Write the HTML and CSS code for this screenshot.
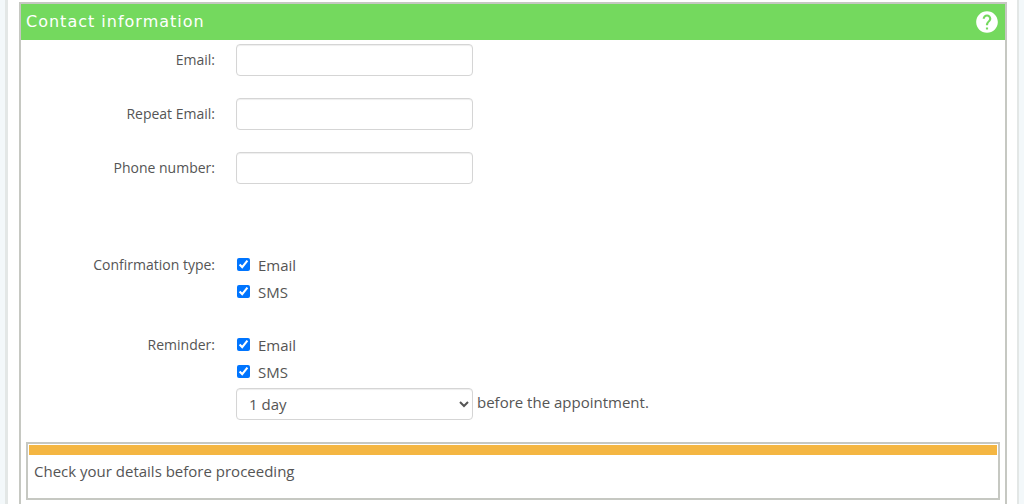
FILE: index.html
```
<!DOCTYPE html>
<html lang="en">
<head>
    <meta charset="UTF-8">
    <meta name="viewport" content="width=device-width, initial-scale=1.0">
    <title>Contact information</title>
    <link rel="stylesheet" href="styles.css">
</head>
<body>
    <main class="page">
        <form class="contact">
            <div class="contact_header">
                <h2 class="header_title">Contact information</h2>
                <button type="button" class="help_btn" aria-label="Help">
                    <svg viewBox="0 0 24 24" width="26" height="26" aria-hidden="true">
                        <path fill="#fff" d="M12 2C6.480 2 2 6.480 2 12s4.480 10 10 10 10-4.480 10-10S17.520 2 12 2zm1 17h-2v-2h2v2zm2.070-7.750l-.9.920C13.450 12.900 13 13.500 13 15h-2v-.5c0-1.100.45-2.100 1.170-2.830l1.240-1.260c.37-.36.59-.86.59-1.410 0-1.100-.9-2-2-2s-2 .9-2 2H8c0-2.210 1.790-4 4-4s4 1.790 4 4c0 .88-.36 1.680-.93 2.250z"/>
                    </svg>
                </button>
            </div>

            <div class="fields">
                <div class="form_row">
                    <label class="row_label" for="email">Email:</label>
                    <input class="text_input" id="email" type="email" name="email">
                </div>
                <div class="form_row">
                    <label class="row_label" for="repeat_email">Repeat Email:</label>
                    <input class="text_input" id="repeat_email" type="email" name="repeat_email">
                </div>
                <div class="form_row">
                    <label class="row_label" for="phone">Phone number:</label>
                    <input class="text_input" id="phone" type="tel" name="phone">
                </div>
            </div>

            <div class="options">
                <div class="form_row" role="group" aria-labelledby="confirmation_label">
                    <span class="row_label" id="confirmation_label">Confirmation type:</span>
                    <div class="checks">
                        <label class="check"><input type="checkbox" name="confirm_email" checked>Email</label>
                        <label class="check"><input type="checkbox" name="confirm_sms" checked>SMS</label>
                    </div>
                </div>
                <div class="form_row" role="group" aria-labelledby="reminder_label">
                    <span class="row_label" id="reminder_label">Reminder:</span>
                    <div class="checks">
                        <label class="check"><input type="checkbox" name="remind_email" checked>Email</label>
                        <label class="check"><input type="checkbox" name="remind_sms" checked>SMS</label>
                        <div class="reminder_time">
                            <select class="text_input" id="reminder_days" name="reminder_days">
                                <option>1 day</option>
                                <option>2 days</option>
                                <option>3 days</option>
                            </select>
                            <label for="reminder_days">before the appointment.</label>
                        </div>
                    </div>
                </div>
            </div>

            <div class="notice">
                <p class="notice_text">Check your details before proceeding</p>
            </div>
        </form>
    </main>
</body>
</html>
```
FILE: styles.css
```
* {
    box-sizing: border-box;
}

body {
    margin: 0;
    background: #f3f8fa;
    color: #555;
    font-family: "Open Sans", sans-serif;
    font-size: 15px;
    line-height: 20px;
}

.page {
    margin: 0 5px;
    padding: 2px 10px 0 11px;
    border: solid #e3e7e6;
    border-width: 0 2px 0 3px;
    background: #fff;
}

/* Green titled box round the whole form */
.contact {
    padding-bottom: 16px;
    border: 2px solid #c6c8c2;
}

.contact_header {
    display: flex;
    justify-content: space-between;
    align-items: center;
    height: 36px;
    padding: 0 5px;
    background: #74d95e;
}

.header_title {
    margin: 0;
    color: #fff;
    font-family: Verdana, "DejaVu Sans", sans-serif;
    font-size: 16px;
    font-weight: normal;
    letter-spacing: 1px;
}

.help_btn {
    display: flex;
    padding: 0;
    border: none;
    background: none;
    cursor: pointer;
}

.fields {
    display: grid;
    gap: 22px;
    padding-top: 4px;
}

.form_row {
    display: grid;
    grid-template-columns: 194px 1fr;
    column-gap: 21px;
}

.row_label {
    padding-top: 6px;
    font-size: 14px;
    text-align: right;
}

.text_input {
    width: 237px;
    height: 32px;
    padding: 0 8px;
    border: 1px solid #d5d5d5;
    border-radius: 4px;
    background-color: #fff;
    box-shadow: inset 0 1px 1px #eee;
    color: #555;
    font: inherit;
}

/* Confirmation and reminder */
.options {
    display: grid;
    gap: 24px;
    padding-top: 65px;
}

.check {
    display: flex;
    align-items: center;
    gap: 8px;
    height: 27px;
    margin-left: 1px;
}

.check input {
    width: 13px;
    height: 13px;
    margin: 0;
    accent-color: #0075ff;
}

.checks {
    padding-top: 2px;
}

.reminder_time {
    display: flex;
    gap: 4px;
    padding-top: 3px;
}

.reminder_time label {
    padding-top: 4px;
}

.notice {
    margin: 22px 5px 0;
    padding: 1px 1px 17px;
    border: 2px solid #c6c8c2;
}

.notice_text {
    margin: 0;
    padding: 6px 5px 0;
    border-top: 10px solid #f4b642;
}
```
